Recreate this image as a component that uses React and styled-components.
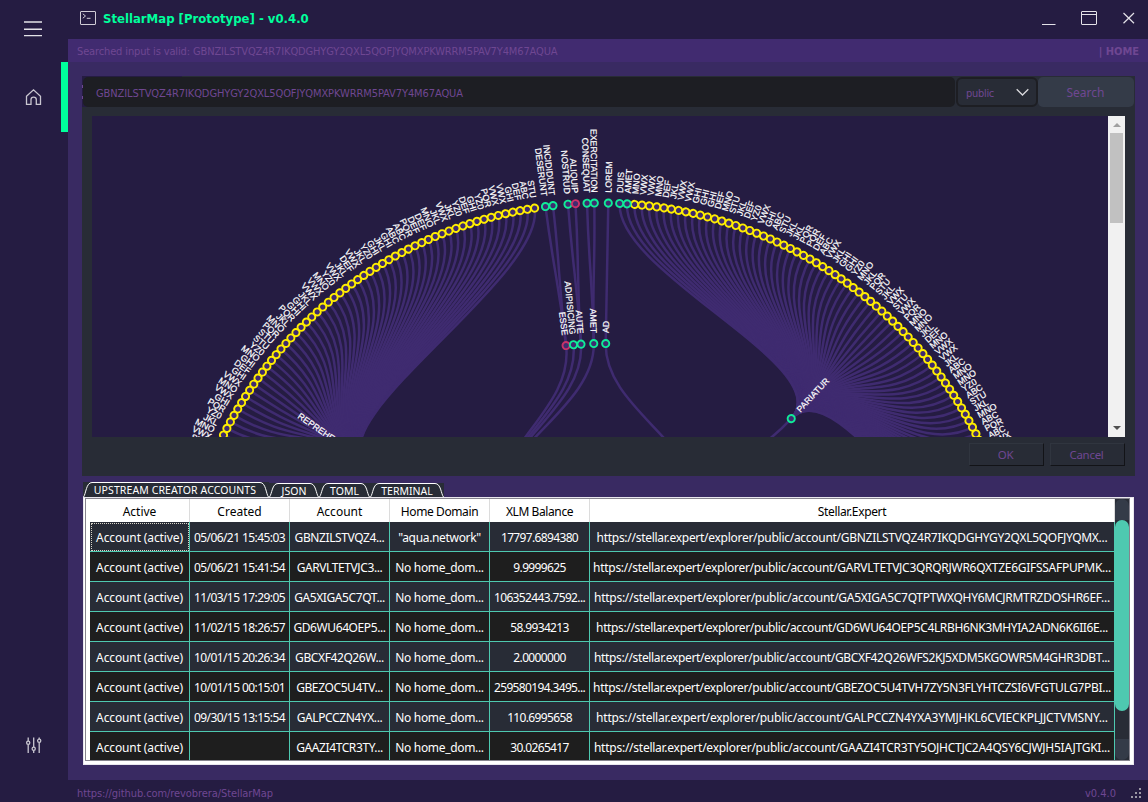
import React from 'react';
import styled, { createGlobalStyle } from 'styled-components';

const c = {
  dark: '#251c42',
  strip: '#412b70',
  body: '#392a62',
  panel: '#282c36',
  input: '#1d1e23',
  button: '#343b48',
  text: '#6f4792',
  green: '#00ff9c',
  teal: '#4ec9b0',
  link: '#3f2b70',
};

const Global = createGlobalStyle`
  *, *::before, *::after { box-sizing: border-box; }
  body { margin: 0; overflow: hidden; background: ${c.dark}; }
`;

const Window = styled.div`
  width: 1148px;
  height: 802px;
  display: flex;
  background: ${c.dark};
  color: ${c.text};
  font: 12px 'Noto Sans', 'Open Sans', sans-serif;
  white-space: nowrap;
`;
const Sidebar = styled.nav`
  width: 68px;
  display: flex;
  flex-direction: column;
`;
const SideItem = styled.div`
  height: ${(p) => p.$h}px;
  display: flex;
  align-items: center;
  padding-left: 24px;
  border-right: 7px solid ${(p) => (p.$active ? c.green : 'transparent')};
  margin-top: ${(p) => p.$top || 0};
`;
const Main = styled.main`
  width: 1080px;
  display: flex;
  flex-direction: column;
`;
const TitleBar = styled.header`
  height: 39px;
  display: flex;
  align-items: center;
  padding: 0 13px 3px 12px;
`;
const Title = styled.h1`
  margin: 0 auto 0 7px;
  font: bold 13px 'DejaVu Sans Condensed', 'DejaVu Sans', sans-serif;
  font-stretch: condensed;
  color: ${c.green};
`;
const WindowButtons = styled.div`
  display: flex;
  gap: 25px;
  align-items: center;
`;
const StatusStrip = styled.div`
  height: 23px;
  display: flex;
  justify-content: space-between;
  align-items: center;
  padding: 2px 9px 0;
  background: ${c.strip};
`;
const Small = styled.span`
  font-family: 'DejaVu Sans Condensed', 'DejaVu Sans', sans-serif;
  font-stretch: condensed;
  font-size: 11px;
  font-weight: ${(p) => (p.$bold ? 700 : 400)};
  letter-spacing: ${(p) => p.$ls || 0}px;
`;
const Content = styled.section`
  height: 718px;
  padding: 14px 13px 15px 14px;
  background: ${c.body};
`;
const Footer = styled.footer`
  height: 22px;
  display: flex;
  align-items: center;
  padding: 4px 5px 0 9px;
`;
const FooterVersion = styled(Small)`
  margin: 0 15px 0 auto;
`;
const SearchPanel = styled.div`
  height: 400px;
  background: ${c.panel};
`;
const SearchRow = styled.div`
  height: 31px;
  display: flex;
  padding: 1px 1px 0;
  background:
    linear-gradient(${c.text}, ${c.text}) 0 9px / 1px 3px no-repeat,
    linear-gradient(${c.text}, ${c.text}) 0 20px / 1px 3px no-repeat,
    linear-gradient(${c.dark}, ${c.dark}) 0 0 / 100px 31px no-repeat;
`;
const SearchInput = styled.div`
  width: 872px;
  height: 30px;
  padding: 3px 0 0 13px;
  display: flex;
  align-items: center;
  border-radius: 5px;
  background: ${c.input};
`;
const Select = styled.div`
  width: 82px;
  height: 30px;
  margin: 0 0 0 1px;
  padding: 0 7px 0 8px;
  display: flex;
  align-items: center;
  justify-content: space-between;
  border: 2px solid ${c.input};
  border-radius: 6px;
  background: ${c.panel};
`;
const SelectValue = styled(Small)`
  padding-top: 2px;
`;
const SearchButton = styled.div`
  width: 96px;
  height: 30px;
  padding-right: 1px;
  display: flex;
  align-items: center;
  justify-content: center;
  border-radius: 5px;
  background: ${c.button};
  font-size: 12px;
`;
const ChartRow = styled.div`
  display: flex;
  margin: 9px 10px 0;
  height: 321px;
`;
const Chart = styled.svg`
  width: 1016px;
  height: 321px;
  background: ${c.dark};
  font-family: 'Liberation Sans', Arial, sans-serif;
  font-size: 8.8px;
`;
const ChartScroll = styled.div`
  width: 17px;
  display: flex;
  flex-direction: column;
  align-items: center;
  background: #f1f1f1;
`;
const Arrow = styled.i`
  margin: ${(p) => (p.$up ? '7px 0 6px' : 'auto 0 7px')};
  border: 4px solid transparent;
  border-${(p) => (p.$up ? 'top' : 'bottom')}-width: 0;
  border-${(p) => (p.$up ? 'bottom' : 'top')}-color: ${(p) => (p.$up ? '#a0a0a0' : '#505050')};
`;
const ChartThumb = styled.div`
  width: 13px;
  height: 90px;
  background: #c1c1c1;
`;
const DialogButtons = styled.div`
  display: flex;
  justify-content: flex-end;
  gap: 6px;
  padding: 6px 10px 0;
`;
const DialogButton = styled.div`
  width: 75px;
  height: 23px;
  padding-right: 2px;
  display: flex;
  align-items: center;
  justify-content: center;
  border: 1px solid;
  border-color: #30353f #121317 #121317 #30353f;
  font-size: 11.5px;
  letter-spacing: -0.3px;
`;
const Tabs = styled.div`
  display: flex;
  align-items: flex-end;
  height: 15px;
  margin: 6px 0 0 1px;
  color: #fff;
`;
const Tab = styled.div`
  position: relative;
  width: ${(p) => p.$w}px;
  height: ${(p) => (p.$on ? 15 : 14)}px;
  svg { display: block; }
`;
const TabLabel = styled.span`
  position: absolute;
  inset: 1px ${(p) => (p.$on ? 2 : 0)}px 0 0;
  text-align: center;
  font: 10.5px/14px 'Noto Sans', sans-serif;
  letter-spacing: ${(p) => (p.$on ? 0.1 : 0)}px;
`;
const Frame = styled.div`
  height: 268px;
  width: 1051px;
  margin-left: 1px;
  padding: 0 3px 2px 0;
  background: #fff;
  border: 1px solid #e9e7ee;
`;
const TableBox = styled.div`
  margin: 0 0 0 1px;
  height: 263px;
  display: flex;
  border: 1px solid #86848e;
  padding-left: 4px;
  overflow: hidden;
`;
const Table = styled.div`
  width: 1025px;
  display: grid;
  grid-template-columns: repeat(5, 100px) 525px;
  grid-template-rows: 23px;
  grid-auto-rows: 30px;
`;
const HeadCell = styled.div`
  color: #000;
  background: #fff;
  border-right: 1px solid #dcdcdc;
  text-align: center;
  font-size: 12px;
  line-height: 25px;
  height: 23px;
  letter-spacing: ${(p) => p.$ls || 0}px;
`;
const Cell = styled.div`
  display: flex;
  align-items: center;
  justify-content: center;
  padding-top: 2px;
  color: #fff;
  background: ${(p) => (p.$odd ? '#1e1e1e' : c.panel)};
  border-right: 1px solid ${c.teal};
  border-bottom: 1px solid ${c.teal};
  outline: ${(p) => (p.$focus ? '1px dotted #d8d4c8' : 'none')};
  outline-offset: -2px;
  font-size: 12px;
  letter-spacing: ${(p) => p.$ls || 0}px;
`;
const TableScroll = styled.div`
  width: 14px;
  display: flex;
  flex-direction: column;
  background: ${c.panel};
`;
const ScrollEnd = styled.div`
  height: 21px;
  flex: none;
  background: ${c.button};
  border-radius: ${(p) => (p.$top ? '7px 7px 0 0' : '0 0 7px 7px')};
  margin-top: ${(p) => (p.$top ? '0' : 'auto')};
`;
const ScrollThumb = styled.div`
  height: 191px;
  border-radius: 7px;
  background: ${c.teal};
`;

const STEP = 0.01757;
const seq = (words) => words.split(' ');
const leftNames = seq(
  'STU ABC DEF GHI VWX VWX PQR YZ0 GHI DEF YZ0 JKL VWX JKL MNO DEF DEF PQR ABC ABC GHI JKL GHI YZ0 JKL VWX DEF JKL VWX YZ0 MNO VWX VWX JKL GHI GHI PQR JKL MNO PQR STU STU YZ0 MNO GHI DEF GHI VWX MNO VWX GHI PQR YZ0 JKL MNO VWX STU ABC STU MNO JKL STU VWX YZ0'
);
const rightNames = seq(
  'MNO VWX VWX MNO DEF JKL VWX VWX GHI GHI GHI DEF MNO STU JKL DEF YZ0 VWX GHI ABC STU JKL JKL PQR PQR DEF ABC VWX JKL GHI GHI YZ0 MNO JKL PQR STU JKL VWX STU VWX PQR MNO MNO JKL DEF MNO VWX VWX JKL ABC MNO MNO YZ0 ABC STU JKL MNO ABC PQR ABC VWX JKL'
);
const PARIATUR = 0.7485;
const REPREHENDERIT = -0.9636;
const outer = 421.5;
const inner = 281;
const root = 140.5;

const node = (name, a, r, parent, tone) => ({ name, a, r, parent, tone });
const fan = (count, names, start, dir, parent) =>
  Array.from({ length: count }, (_, i) =>
    node(names[i % names.length], start + dir * i * STEP, outer, parent, '#ffee00')
  );

const GREEN = '#10ec98';
const PINK = '#c8326a';
const nodes = [
  ...fan(92, leftNames, -0.1557, -1, REPREHENDERIT),
  ...fan(78, rightNames, 0.0822, 1, PARIATUR),
  node('DESERUNT', -0.1297, outer, -0.121, GREEN),
  node('INCIDIDUNT', -0.1117, outer, -0.121, GREEN),
  node('NOSTRUD', -0.076, outer, -0.0677, GREEN),
  node('ALIQUIP', -0.0582, outer, -0.0677, PINK),
  node('CONSEQUAT', -0.0308, outer, -0.0222, GREEN),
  node('EXERCITATION', -0.0135, outer, -0.0222, GREEN),
  node('LOREM', 0.0197, outer, 0.0203, GREEN),
  node('DUIS', 0.0467, outer, PARIATUR, GREEN),
  node('AMET', 0.0643, outer, PARIATUR, GREEN),
  node('ESSE', -0.121, inner, -0.66, PINK),
  node('ADIPISICING', -0.0945, inner, -0.66, GREEN),
  node('AUTE', -0.0677, inner, -0.66, GREEN),
  node('AMET', -0.0222, inner, -0.66, GREEN),
  node('AD', 0.0203, inner, 0.61, GREEN),
  node('PARIATUR', PARIATUR, inner, 0.61, GREEN),
  node('REPREHENDERIT', REPREHENDERIT, inner, -0.9, GREEN),
];

const at = (a, r) => `${(r * Math.sin(a)).toFixed(2)},${(-r * Math.cos(a)).toFixed(2)}`;
const linkPath = ({ a, r, parent }) => {
  const r1 = r === outer ? inner : root;
  const mid = (r + r1) / 2;
  return `M${at(a, r)}C${at(a, mid)} ${at(parent, mid)} ${at(parent, r1)}`;
};

function RadialTree() {
  return (
    <Chart viewBox="-508 -508.5 1016 321">
      <g fill="none" stroke={c.link} strokeWidth="2.5">
        {nodes.map((n, i) => (
          <path key={i} d={linkPath(n)} />
        ))}
      </g>
      {nodes.map((n, i) => {
        const left = n.a < 0;
        return (
          <g key={i} transform={`rotate(${(n.a * 180) / Math.PI - 90}) translate(${n.r},0)`}>
            <circle r="3.6" fill={c.link} stroke={n.tone} strokeWidth="1.9" />
            <text
              fill="#fff"
              stroke="#fff"
              strokeWidth=".2"
              dy=".33em"
              x={left ? -10.5 : 10.5}
              textAnchor={left ? 'end' : 'start'}
              transform={left ? 'rotate(180)' : undefined}
            >
              {n.name}
            </text>
          </g>
        );
      })}
    </Chart>
  );
}

const columns = [
  ['Active', 0],
  ['Created', 0],
  ['Account', 0],
  ['Home Domain', -0.4],
  ['XLM Balance', -0.4],
  ['Stellar.Expert', -0.35],
];
const base = 'https://stellar.expert/explorer/public/account/';
const rows = [
  ['05/06/21 15:45:03', 'GBNZILSTVQZ4...', '"aqua.network"', '17797.6894380', 'GBNZILSTVQZ4R7IKQDGHYGY2QXL5QOFJYQMX...', -0.28],
  ['05/06/21 15:41:54', 'GARVLTETVJC3...', 'No home_dom...', '9.9999625', 'GARVLTETVJC3QRQRJWR6QXTZE6GIFSSAFPUPMK...', -0.28],
  ['11/03/15 17:29:05', 'GA5XIGA5C7QT...', 'No home_dom...', '106352443.7592...', 'GA5XIGA5C7QTPTWXQHY6MCJRMTRZDOSHR6EF...', -0.28],
  ['11/02/15 18:26:57', 'GD6WU64OEP5...', 'No home_dom...', '58.9934213', 'GD6WU64OEP5C4LRBH6NK3MHYIA2ADN6K6II6E...', -0.37],
  ['10/01/15 20:26:34', 'GBCXF42Q26W...', 'No home_dom...', '2.0000000', 'GBCXF42Q26WFS2KJ5XDM5KGOWR5M4GHR3DBT...', -0.35],
  ['10/01/15 00:15:01', 'GBEZOC5U4TV...', 'No home_dom...', '259580194.3495...', 'GBEZOC5U4TVH7ZY5N3FLYHTCZSI6VFGTULG7PBI...', -0.33],
  ['09/30/15 13:15:54', 'GALPCCZN4YX...', 'No home_dom...', '110.6995658', 'GALPCCZN4YXA3YMJHKL6CVIECKPLJJCTVMSNY...', -0.19],
  ['', 'GAAZI4TCR3TY...', 'No home_dom...', '30.0265417', 'GAAZI4TCR3TY5OJHCTJC2A4QSY6CJWJH5IAJTGKI...', -0.25],
];
const tabs = [
  ['UPSTREAM CREATOR ACCOUNTS', 186, true],
  ['JSON', 50],
  ['TOML', 51],
  ['TERMINAL', 74],
];

function TabShape({ w, h }) {
  return (
    <svg width={w} height={h}>
      <rect width={w} height={h} fill={c.panel} />
      <path
        d={`M.5 ${h}C3 ${h - 3} 3 .5 9 .5H${w - 9}C${w - 3} .5 ${w - 3} ${h - 3} ${w - 0.5} ${h}`}
        fill="none"
        stroke="#fff"
      />
    </svg>
  );
}

export default function App() {
  return (
    <Window>
      <Global />
      <Sidebar>
        <SideItem $h={58}>
          <svg width="18" height="18" stroke="#e4e2e8" strokeWidth="1.4">
            <path d="M0 2H18M0 9.2H18M0 15.6H18" />
          </svg>
        </SideItem>
        <SideItem $h={70} $active $top="4px">
          <svg width="20" height="18" fill="none" stroke="#c9c6d0" strokeWidth="1.3">
            <path d="M2.5 8.2L9.5 1.8L16.5 8.2V16.3H12.3V11.5Q12.3 9.2 9.6 9.2Q7 9.2 7 11.5V16.3H2.5Z" />
          </svg>
        </SideItem>
        <SideItem $h={58} $top="auto">
          <svg width="20" height="18" fill="none" stroke="#c9c6d0" strokeWidth="1.3">
            <path d="M4.2 1.5V5M4.2 8.5V17M9.7 1.5V11M9.7 14.5V17M15.2 1.5V3M15.2 6.5V17" />
            <circle cx="4.2" cy="6.8" r="1.6" />
            <circle cx="9.7" cy="12.8" r="1.6" />
            <circle cx="15.2" cy="4.8" r="1.6" />
          </svg>
        </SideItem>
        <SideItem $h={28} />
      </Sidebar>
      <Main>
        <TitleBar>
          <svg width="16" height="14" fill="none" stroke="#d0cdd6">
            <rect x=".5" y=".5" width="15" height="13" rx=".5" />
            <path d="M2.8 2.8L5.5 5L2.8 7.2M6.8 7.3H10.5" />
          </svg>
          <Title>StellarMap [Prototype] - v0.4.0</Title>
          <WindowButtons>
            <svg width="14" height="16"><path d="M0 14.5H13.5" stroke="#e4e2e8" /></svg>
            <svg width="16" height="14" fill="none" stroke="#e4e2e8">
              <rect x=".5" y=".5" width="15" height="13" rx=".5" />
              <path d="M.5 3.5H15.5" />
            </svg>
            <svg width="13" height="12" stroke="#e4e2e8" strokeWidth="1.2">
              <path d="M1.5 1L12 11.3M12 1L1.5 11.3" />
            </svg>
          </WindowButtons>
        </TitleBar>
        <StatusStrip>
          <Small $ls={-0.135}>Searched input is valid: GBNZILSTVQZ4R7IKQDGHYGY2QXL5QOFJYQMXPKWRRM5PAV7Y4M67AQUA</Small>
          <Small $bold>| HOME</Small>
        </StatusStrip>
        <Content>
          <SearchPanel>
            <SearchRow>
              <SearchInput>
                <Small $ls={-0.09}>GBNZILSTVQZ4R7IKQDGHYGY2QXL5QOFJYQMXPKWRRM5PAV7Y4M67AQUA</Small>
              </SearchInput>
              <Select>
                <SelectValue $ls={-0.3}>public</SelectValue>
                <svg width="13" height="9" fill="none" stroke="#d8d8dc" strokeWidth="1.3">
                  <path d="M.7 1.2L6.5 7L12.3 1.2" />
                </svg>
              </Select>
              <SearchButton>Search</SearchButton>
            </SearchRow>
            <ChartRow>
              <RadialTree />
              <ChartScroll>
                <Arrow $up />
                <ChartThumb />
                <Arrow />
              </ChartScroll>
            </ChartRow>
            <DialogButtons>
              <DialogButton>OK</DialogButton>
              <DialogButton>Cancel</DialogButton>
            </DialogButtons>
          </SearchPanel>
          <Tabs>
            {tabs.map(([name, w, on]) => (
              <Tab key={name} $w={w} $on={on}>
                <TabShape w={w} h={on ? 15 : 14} />
                <TabLabel $on={on}>{name}</TabLabel>
              </Tab>
            ))}
          </Tabs>
          <Frame>
            <TableBox>
              <Table>
                {columns.map(([name, ls]) => (
                  <HeadCell key={name} $ls={ls}>{name}</HeadCell>
                ))}
                {rows.map((r, i) => (
                  <React.Fragment key={i}>
                    <Cell $odd={i % 2} $focus={i === 0} $ls={-0.12}>Account (active)</Cell>
                    <Cell $odd={i % 2} $ls={-0.57}>{r[0]}</Cell>
                    <Cell $odd={i % 2} $ls={-0.4}>{r[1]}</Cell>
                    <Cell $odd={i % 2} $ls={-0.33}>{r[2]}</Cell>
                    <Cell $odd={i % 2} $ls={-0.65}>{r[3]}</Cell>
                    <Cell $odd={i % 2} $ls={r[5]}>{base + r[4]}</Cell>
                  </React.Fragment>
                ))}
              </Table>
              <TableScroll>
                <ScrollEnd $top />
                <ScrollThumb />
                <ScrollEnd />
              </TableScroll>
            </TableBox>
          </Frame>
        </Content>
        <Footer>
          <Small $ls={-0.08}>https://github.com/revobrera/StellarMap</Small>
          <FooterVersion>v0.4.0</FooterVersion>
          <svg width="12" height="12" fill="#9c98a6">
            <path d="M8 1h2v2h-2zM8 5h2v2h-2zM4 5h2v2h-2zM8 9h2v2h-2zM4 9h2v2h-2zM0 9h2v2h-2z" />
          </svg>
        </Footer>
      </Main>
    </Window>
  );
}
